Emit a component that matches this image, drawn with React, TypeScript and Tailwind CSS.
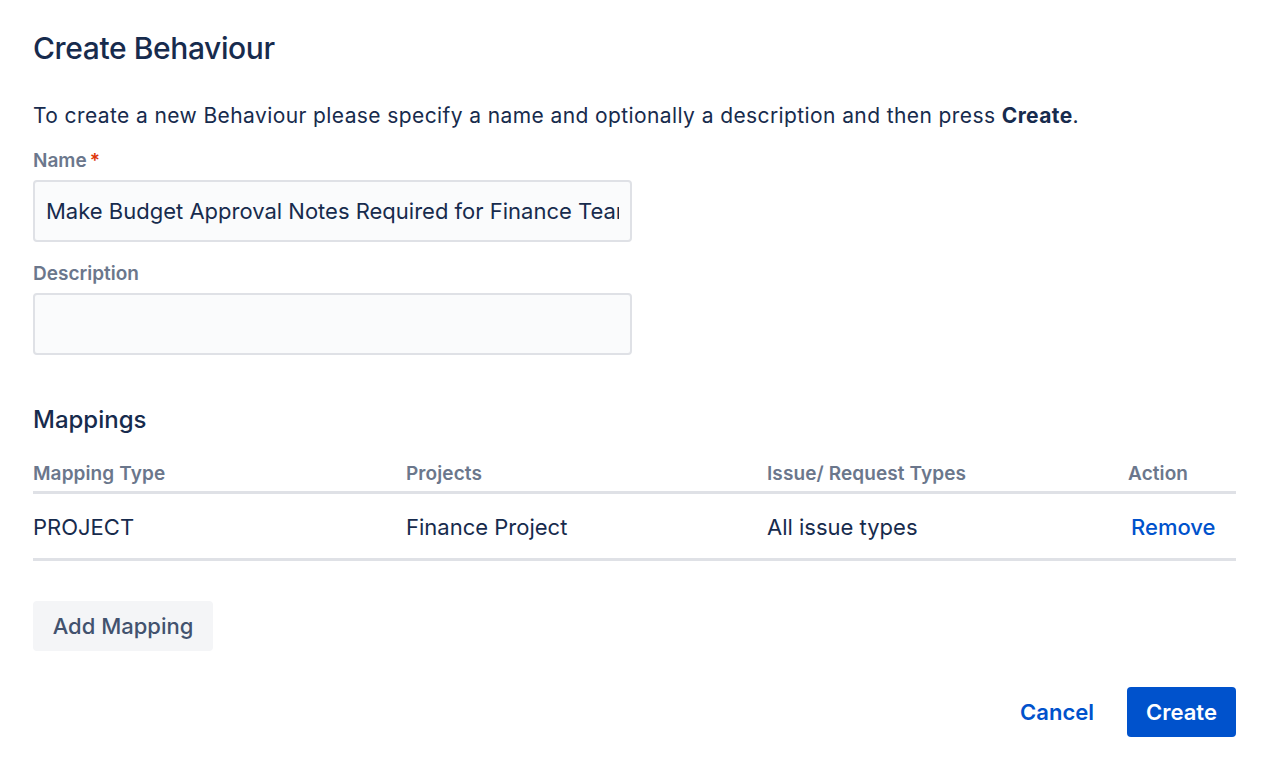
import React from "react";

export default function App() {
  return (
    <div className="min-h-screen w-full bg-white font-['Inter',sans-serif] text-[#172b4d] antialiased">
      <div className="pl-[33px] pt-[28px] w-[1236px]">
        <h1 className="text-[30px] leading-[40px] font-medium tracking-[-0.4px]">Create Behaviour</h1>
        <p className="mt-[36px] text-[21px] leading-[24px] tracking-[0.4px]">
          To create a new Behaviour please specify a name and optionally a description and then press{" "}
          <span className="font-bold">Create</span>.
        </p>

        <label className="mt-[23px] block text-[19px] leading-[20px] font-semibold text-[#6b778c]">
          Name<span className="ml-[3px] text-[#de350b]">*</span>
        </label>
        <input
          readOnly
          value="Make Budget Approval Notes Required for Finance Team"
          className="mt-[9px] block h-[62px] w-[599px] rounded-[4px] border-2 border-[#dfe1e6] bg-[#fafbfc] px-[11px] text-[22px] text-[#172b4d] outline-none"
        />

        <label className="mt-[22px] block text-[19px] leading-[20px] font-semibold text-[#6b778c]">
          Description
        </label>
        <input
          readOnly
          value=""
          className="mt-[9px] block h-[62px] w-[599px] rounded-[4px] border-2 border-[#dfe1e6] bg-[#fafbfc] px-[11px] text-[22px] outline-none"
        />

        <h2 className="mt-[51px] text-[24px] leading-[28px] font-medium">Mappings</h2>

        <div className="mt-[30px] w-[1203px]">
          <div className="grid grid-cols-[373px_361px_361px_1fr] border-b-[3px] border-[#dfe1e6] pb-[7px] text-[19px] leading-[20px] font-semibold text-[#6b778c] tracking-[0.1px]">
            <div>Mapping Type</div>
            <div>Projects</div>
            <div>Issue/ Request Types</div>
            <div>Action</div>
          </div>
          <div className="grid grid-cols-[373px_361px_361px_1fr] border-b-[3px] border-[#dfe1e6] pt-[21px] pb-[19px] text-[22px] leading-[24px]">
            <div>PROJECT</div>
            <div>Finance Project</div>
            <div>All issue types</div>
            <div>
              <a className="pl-[3px] font-medium text-[#0052cc] cursor-pointer">Remove</a>
            </div>
          </div>
        </div>

        <button className="mt-[40px] flex h-[50px] w-[180px] items-center justify-center rounded-[4px] bg-[#f4f5f7] text-[22px] font-medium text-[#42526e]">
          Add Mapping
        </button>

        <div className="mt-[36px] flex w-[1203px] items-center justify-end gap-[15px]">
          <button className="h-[50px] px-[18px] text-[22px] font-semibold text-[#0052cc]">Cancel</button>
          <button className="h-[50px] w-[109px] rounded-[4px] bg-[#0052cc] text-[22px] font-semibold text-white">
            Create
          </button>
        </div>
      </div>
    </div>
  );
}
